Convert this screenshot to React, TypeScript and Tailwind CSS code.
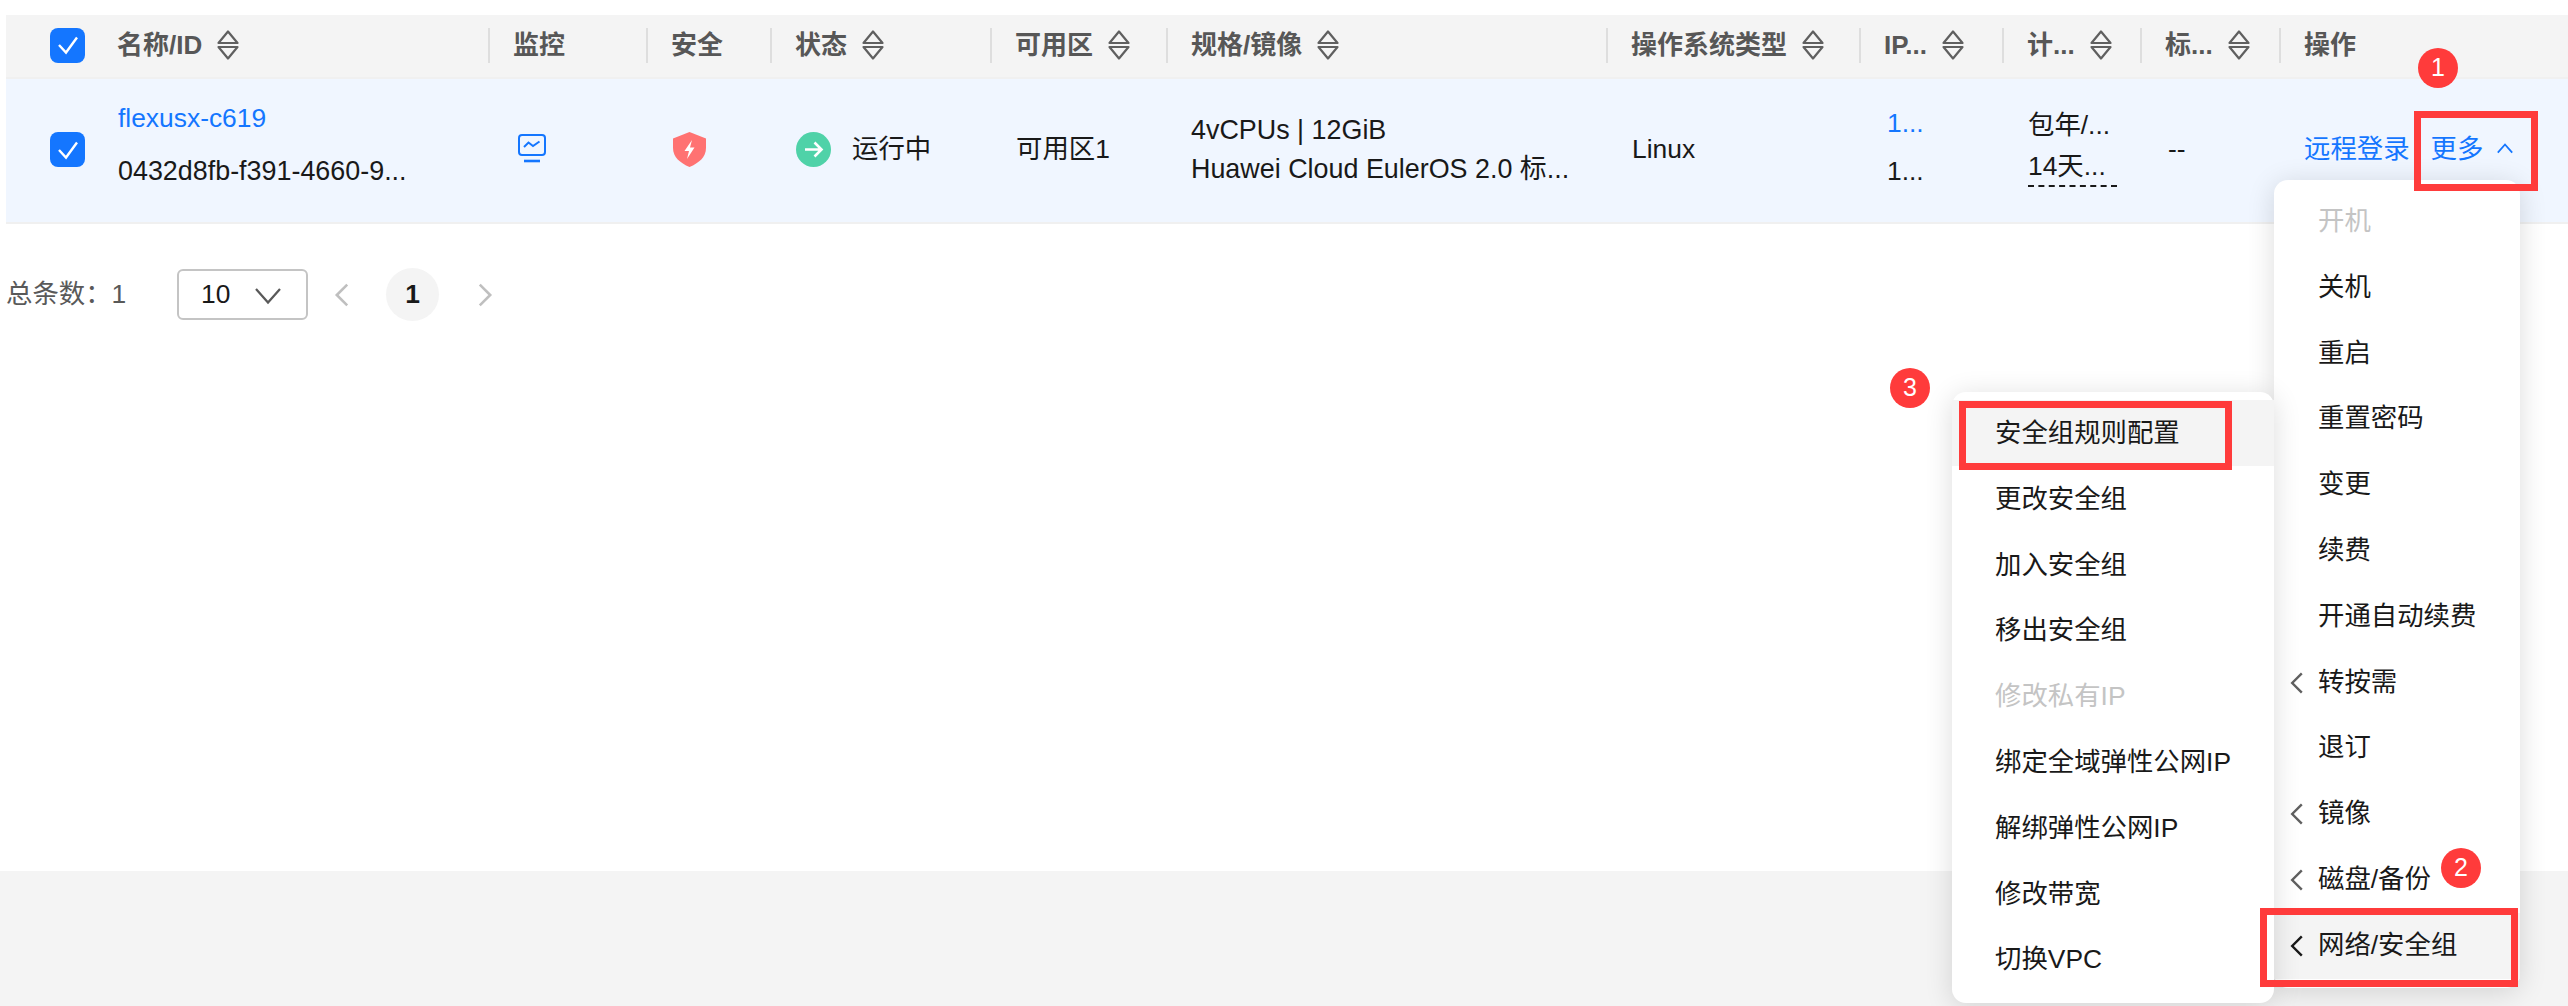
import React from "react";

const font = { fontFamily: '"Liberation Sans","Noto Sans CJK SC",sans-serif' };

function Sort() {
  return (
    <svg width="24" height="30" viewBox="0 0 24 30" fill="none" stroke="#5f5f5f" strokeWidth="2.2" strokeLinejoin="round" className="shrink-0">
      <path d="M12 1.5 L21.5 13 H2.5 Z" />
      <path d="M12 28.5 L21.5 17 H2.5 Z" />
    </svg>
  );
}

function Check() {
  return (
    <div className="w-[35px] h-[35px] rounded-[8px] bg-[#1476ff] flex items-center justify-center shrink-0">
      <svg width="24" height="22" viewBox="0 0 24 22" fill="none" stroke="#fff" strokeWidth="2.4">
        <path d="M3 11 L10 18.5 L21 3.5" />
      </svg>
    </div>
  );
}

function HeadCell({ w, label, sort, first }: { w: string; label: string; sort?: boolean; first?: boolean }) {
  return (
    <div className={`${w} h-[35px] flex items-center shrink-0 relative`}>
      {!first && <span className="absolute left-[-1px] top-0 w-[2px] h-[35px] bg-[#dedede]" />}
      <span className="pl-[24px] font-bold text-[26px] leading-[35px] text-[#575757] whitespace-nowrap">{label}</span>
      {sort && <span className="ml-[14px]"><Sort /></span>}
    </div>
  );
}

function Chevron({ dir, color = "#808080", size = 20, sw = 2 }: { dir: "left" | "right" | "down" | "up"; color?: string; size?: number; sw?: number }) {
  const d = { left: "M14 2 L6 10 L14 18", right: "M6 2 L14 10 L6 18", down: "M2 6 L10 15 L18 6", up: "M2 14 L10 5 L18 14" }[dir];
  return (
    <svg width={size} height={size} viewBox="0 0 20 20" fill="none" stroke={color} strokeWidth={sw} className="shrink-0">
      <path d={d} />
    </svg>
  );
}

const menu1: { t: string; dis?: boolean; sub?: boolean; active?: boolean }[] = [
  { t: "开机", dis: true },
  { t: "关机" },
  { t: "重启" },
  { t: "重置密码" },
  { t: "变更" },
  { t: "续费" },
  { t: "开通自动续费" },
  { t: "转按需", sub: true },
  { t: "退订" },
  { t: "镜像", sub: true },
  { t: "磁盘/备份", sub: true },
  { t: "网络/安全组", sub: true, active: true },
];

const menu2: { t: string; dis?: boolean; active?: boolean }[] = [
  { t: "安全组规则配置", active: true },
  { t: "更改安全组" },
  { t: "加入安全组" },
  { t: "移出安全组" },
  { t: "修改私有IP", dis: true },
  { t: "绑定全域弹性公网IP" },
  { t: "解绑弹性公网IP" },
  { t: "修改带宽" },
  { t: "切换VPC" },
];

function Badge({ n, cls }: { n: string; cls: string }) {
  return (
    <div className={`absolute ${cls} w-[40px] h-[40px] rounded-full bg-[#ff3b3b] text-white text-[25px] flex items-center justify-center`}>{n}</div>
  );
}

export default function App() {
  return (
    <div style={font} className="relative w-[2568px] h-[1006px] overflow-hidden bg-white flex flex-col text-[26.4px] text-[#191919]">
      <div className="h-[871px] shrink-0 pt-[15px] pl-[6px]">
        {/* header */}
        <div className="h-[64px] bg-[#f4f4f4] border-b-2 border-[#f0f0f0] flex items-center pb-[2px]">
          <div className="w-[87px] pl-[44px] shrink-0"><Check /></div>
          <HeadCell first w="w-[396px]" label="名称/ID" sort />
          <HeadCell w="w-[158px]" label="监控" />
          <HeadCell w="w-[124px]" label="安全" />
          <HeadCell w="w-[220px]" label="状态" sort />
          <HeadCell w="w-[176px]" label="可用区" sort />
          <HeadCell w="w-[440px]" label="规格/镜像" sort />
          <HeadCell w="w-[253px]" label="操作系统类型" sort />
          <HeadCell w="w-[143px]" label="IP..." sort />
          <HeadCell w="w-[138px]" label="计..." sort />
          <HeadCell w="w-[139px]" label="标..." sort />
          <HeadCell w="w-[288px]" label="操作" />
        </div>
        {/* row */}
        <div className="h-[145px] bg-[#f0f6ff] border-b-2 border-[#f0f0f0] flex items-center pb-[2px]">
          <div className="w-[87px] pl-[44px] shrink-0"><Check /></div>
          <div className="w-[396px] pl-[25px] shrink-0 flex flex-col gap-[23px] leading-[30px] pb-[10px] text-[26.9px]">
            <span className="text-[#1476ff] text-[26.4px]">flexusx-c619</span>
            <span>0432d8fb-f391-4660-9...</span>
          </div>
          <div className="w-[158px] pl-[29px] shrink-0 pb-[3px]">
            <svg width="28" height="29" viewBox="0 0 28 29" fill="none" stroke="#1476ff" strokeWidth="2">
              <rect x="1" y="1" width="26" height="20" rx="3" />
              <path d="M6 13 L10.5 8.5 L15 12 L21.5 7.5" />
              <path d="M6 27 H22" strokeWidth="2.6" />
            </svg>
          </div>
          <div className="w-[124px] pl-[26px] shrink-0">
            <svg width="33" height="35" viewBox="0 0 33 35" className="block">
              <path d="M16.5 0 L33 6.5 V16 C33 25 26 31 16.5 35 C7 31 0 25 0 16 V6.5 Z" fill="#ff7272" />
              <path d="M19 8 L11.5 19 H16 L14 27 L21.5 15.5 H17 Z" fill="#fff" />
            </svg>
          </div>
          <div className="w-[220px] pl-[25px] shrink-0 flex items-center gap-[21px]">
            <svg width="35" height="35" viewBox="0 0 35 35" fill="none" stroke="#fff" strokeWidth="2.6">
              <circle cx="17.5" cy="17.5" r="17.5" fill="#4fd2a8" stroke="none" />
              <path d="M9 17.5 H25 M18.5 10.5 L25.5 17.5 L18.5 24.5" />
            </svg>
            <span>运行中</span>
          </div>
          <div className="w-[176px] pl-[25px] shrink-0">可用区1</div>
          <div className="w-[440px] pl-[24px] shrink-0 flex flex-col gap-[9px] leading-[30px] text-[26.9px]">
            <span>4vCPUs | 12GiB</span>
            <span>Huawei Cloud EulerOS 2.0 标...</span>
          </div>
          <div className="w-[253px] pl-[25px] shrink-0">Linux</div>
          <div className="w-[143px] pl-[27px] shrink-0 flex flex-col gap-[18px] leading-[30px] pb-[6px]">
            <span className="text-[#1476ff]">1...</span>
            <span>1...</span>
          </div>
          <div className="w-[138px] pl-[25px] shrink-0 flex flex-col pb-[3px]">
            <span className="leading-[30px] mb-[11px]">包年/...</span>
            <span className="w-[89px] leading-[30px] pb-[4px] border-b-2 border-dashed border-[#191919]">14天...</span>
          </div>
          <div className="w-[139px] pl-[27px] shrink-0">--</div>
          <div className="w-[288px] pl-[24px] shrink-0 flex items-center text-[#1476ff]">
            <span>远程登录</span>
            <span className="ml-[21px]">更多</span>
            <span className="ml-[13px]"><Chevron dir="up" color="#1476ff" size={18} /></span>
          </div>
        </div>
        {/* pagination */}
        <div className="mt-[44px] flex items-center h-[53px]">
          <span className="text-[#595959] w-[171px]">总条数：1</span>
          <div className="w-[131px] h-[51px] rounded-[6px] border-2 border-[#c4c4c4] flex items-center pl-[22px] text-[#191919]">
            <span>10</span>
            <span className="ml-[23px]"><Chevron dir="down" color="#595959" size={30} sw={1.5} /></span>
          </div>
          <span className="ml-[21px]"><Chevron dir="left" color="#bfbfbf" size={26} /></span>
          <div className="ml-[31px] w-[53px] h-[53px] rounded-full bg-[#f4f4f4] flex items-center justify-center font-bold">1</div>
          <span className="ml-[33px]"><Chevron dir="right" color="#bfbfbf" size={26} /></span>
        </div>
      </div>
      <div className="flex-1 bg-[#f4f4f4]" />

      {/* dropdown 1 */}
      <div className="absolute left-[2274px] top-[180px] w-[246px] h-[808px] bg-white rounded-[14px] pt-[9px] shadow-[0_4px_28px_rgba(0,0,0,0.14)]">
        {menu1.map((m) => (
          <div key={m.t} className={`h-[65.8px] flex items-center pl-[44px] relative whitespace-nowrap ${m.dis ? "text-[#c4c4c4]" : ""} ${m.active ? "bg-[#f4f4f4]" : ""}`}>
            {m.sub && (
              <span className="absolute left-[11px] top-[21px]">
                <Chevron dir="left" color={m.active ? "#191919" : "#606060"} size={24} />
              </span>
            )}
            {m.t}
          </div>
        ))}
      </div>

      {/* dropdown 2 */}
      <div className="absolute left-[1952px] top-[392px] w-[322px] h-[611px] bg-white rounded-[14px] pt-[8px] shadow-[0_4px_28px_rgba(0,0,0,0.14)]">
        {menu2.map((m) => (
          <div key={m.t} className={`h-[65.8px] flex items-center pl-[43px] whitespace-nowrap pt-[2px] ${m.dis ? "text-[#c4c4c4]" : ""} ${m.active ? "bg-[#f4f4f4]" : ""}`}>
            {m.t}
          </div>
        ))}
      </div>

      {/* annotations */}
      <div className="absolute left-[2414px] top-[111px] w-[124px] h-[80px] border-[7px] border-[#ff3b3b]" />
      <div className="absolute left-[2260px] top-[908px] w-[258px] h-[79px] border-[7px] border-[#ff3b3b]" />
      <div className="absolute left-[1959px] top-[401px] w-[273px] h-[69px] border-[7px] border-[#ff3b3b]" />
      <Badge n="1" cls="left-[2418px] top-[48px]" />
      <Badge n="2" cls="left-[2441px] top-[848px]" />
      <Badge n="3" cls="left-[1890px] top-[368px]" />
    </div>
  );
}
